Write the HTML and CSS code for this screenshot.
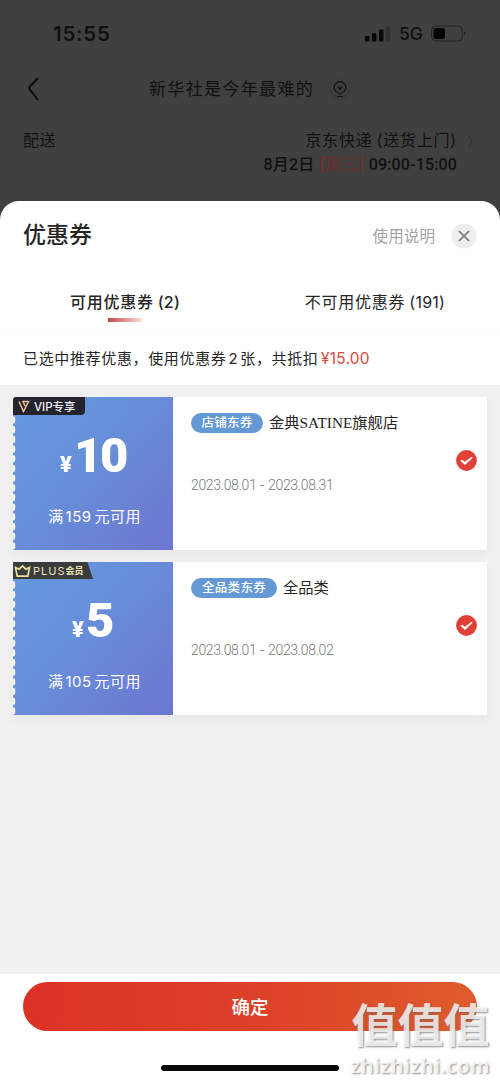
FILE: index.html
```html
<!DOCTYPE html>
<html lang="zh-CN">
<head>
<meta charset="utf-8">
<title>优惠券</title>
<link rel="stylesheet" href="styles.css">
</head>
<body>
<div class="screen">
  <header class="backdrop">
    <div class="status">
      <span class="time">15:55</span>
      <div class="signals">
        <svg class="bars" width="26" height="16" viewBox="0 0 26 16"><rect x="0" y="10" width="4.4" height="5.5" rx="1"/><rect x="7" y="7" width="4.4" height="8.5" rx="1"/><rect x="14" y="3.5" width="4.4" height="12" rx="1"/><rect x="20.8" y="0.5" width="4.4" height="15" rx="1" fill="#303030"/></svg>
        <span class="network">5G</span>
        <svg width="36" height="18" viewBox="0 0 36 18"><rect x=".7" y="1" width="30.5" height="15" rx="4" fill="none" stroke="#222" stroke-width="1"/><rect x="2.5" y="3" width="11.5" height="11" rx="2.5" fill="#050505"/><path d="M33 6.5q3 2 0 4z" fill="#222"/></svg>
      </div>
    </div>
    <nav class="nav">
      <svg class="back" width="16" height="28" viewBox="0 0 16 28"><path d="M12 3 3.4 12Q2.5 13 3.4 14L12 25" fill="none" stroke="#0c0c0c" stroke-width="2"/></svg>
      <span class="nav-title">新华社是今年最难的</span>
      <svg class="pin" width="24" height="26" viewBox="0 0 24 26"><circle cx="12" cy="13" r="11.5" fill="#3d3d3d"/><g fill="none" stroke="#141414" stroke-width="1.2"><path d="M12 18.2C8 16 6.2 14 6.2 11.4a5.8 5.8 0 0 1 11.6 0C17.8 14 16 16 12 18.2zM9 20.5h6"/><path d="m9.6 10.6 2.4 2.7 2.4-2.7M12 10v1.6"/></g></svg>
    </nav>
    <div class="delivery">
      <span class="delivery-label">配送</span>
      <div class="delivery-info">
        <div class="method">京东快递<span class="paren">(</span>送货上门)<svg width="8" height="16" viewBox="0 0 8 16"><path d="m2 2 3 6-3 6" fill="none" stroke="#303030"/></svg></div>
        <div class="slot"><span class="day">8月2日</span><span class="weekday">[周三]</span><span class="hours">09:00-15:00</span></div>
      </div>
    </div>
  </header>

  <main class="sheet">
    <div class="sheet-head">
      <h1>优惠券</h1>
      <span class="help">使用说明</span>
      <svg class="close" width="26" height="26" viewBox="0 0 26 26"><circle cx="13" cy="13" r="12.6" fill="#efefef"/><path d="m8 8 10 10M18 8 8 18" stroke="#777" stroke-width="1.7"/></svg>
    </div>
    <div class="tabs">
      <div class="tab active"><span class="tab-text">可用优惠券<span class="count">(2)</span></span></div>
      <div class="tab"><span class="tab-text">不可用优惠券<span class="count">(191)</span></span></div>
    </div>
    <p class="summary"><span class="chosen">已选中推荐优惠，使用优惠券<span class="number">2</span>张，共抵扣</span><span class="saving">¥15.00</span></p>

    <section class="coupons">
      <article class="coupon">
        <div class="value">
          <div class="badge vip"><svg width="12" height="13" viewBox="0 0 12 13"><path d="M1 1.5 5.5 11.5 10.5 1.5H5L7 6" fill="none" stroke="#e9bd91" stroke-width="1.5"/></svg><span>VIP专享</span></div>
          <div class="amount"><span class="yen">¥</span><span class="ten">10</span></div>
          <div class="rule">满<b>159</b>元可用</div>
          <svg class="edge" width="4" height="153" viewBox="0 0 4 153"><defs><pattern id="teeth" width="4" height="9.7" patternUnits="userSpaceOnUse"><ellipse cx="0" cy="3.4" rx="2.3" ry="3.9" fill="#f4f5f7"/></pattern></defs><rect width="4" height="153" fill="url(#teeth)"/></svg>
        </div>
        <div class="detail">
          <div class="coupon-title"><span class="tag">店铺东券</span><span class="shop">金典<span class="latin">SATINE</span>旗舰店</span></div>
          <div class="dates">2023.08.01 <span class="dash">-</span> 2023.08.31</div>
        </div>
        <svg class="check" width="21" height="21" viewBox="0 0 21 21"><circle cx="10.5" cy="10.5" r="10.4" fill="#df4038"/><path d="m4.2 10.8 2-1.1 2.7 2 6.8-5 1 1.1-7.7 7.2z" fill="#fff"/></svg>
      </article>
      <article class="coupon">
        <div class="value">
          <div class="badge plus"><svg width="17" height="14" viewBox="0 0 17 14"><path d="m1.5 3.5 3.7 1.7L8.5 2l3.3 3.2 3.7-1.7-1.7 8.7H3.2z" fill="none" stroke="#eee29c" stroke-width="1.7"/></svg><span class="plus-word">PLUS</span><span class="member">会员</span></div>
          <div class="amount"><span class="yen">¥</span><span class="five">5</span></div>
          <div class="rule">满<b>105</b>元可用</div>
          <svg class="edge" width="4" height="153" viewBox="0 0 4 153"><rect width="4" height="153" fill="url(#teeth)"/></svg>
        </div>
        <div class="detail">
          <div class="coupon-title"><span class="tag wide">全品类东券</span><span class="shop">全品类</span></div>
          <div class="dates">2023.08.01 <span class="dash">-</span> 2023.08.02</div>
        </div>
        <svg class="check" width="21" height="21" viewBox="0 0 21 21"><circle cx="10.5" cy="10.5" r="10.4" fill="#df4038"/><path d="m4.2 10.8 2-1.1 2.7 2 6.8-5 1 1.1-7.7 7.2z" fill="#fff"/></svg>
      </article>
    </section>

    <footer class="actions">
      <button class="confirm">确定</button>
      <div class="home"></div>
    </footer>
  </main>
  <div class="watermark"><div class="mark-name">值值值</div><div class="mark-site">zhizhizhi.com</div></div>
</div>
</body>
</html>
```
FILE: styles.css
```css
* { box-sizing: border-box; }
body { margin: 0; background: #404040; font-family: Inter, "Noto Sans CJK SC", sans-serif; color: #262626; }
svg { display: block; flex: none; }
.screen { position: relative; width: 500px; height: 1082px; overflow: hidden; display: flex; flex-direction: column; white-space: nowrap; }

.backdrop { height: 201px; flex: none; color: #111; }
.status { display: flex; justify-content: space-between; height: 66px; padding: 19px 33px 0 53px; }
.time { font-size: 20.5px; line-height: 30px; font-weight: 600; letter-spacing: .75px; }
.signals { display: flex; align-items: center; height: 29px; }
.bars { fill: #080808; margin-right: 8px; }
.network { width: 25px; font-size: 17.5px; font-weight: 500; margin-right: 7px; }
.nav { display: flex; align-items: center; height: 46px; padding-left: 26px; }
.nav-title { width: 165px; margin-left: 107px; font-size: 17px; letter-spacing: 1.35px; line-height: 44px; }
.pin { margin-left: 14px; }
.delivery { display: flex; justify-content: space-between; padding: 16px 25px 0 23px; }
.delivery-label { font-size: 16px; line-height: 25px; letter-spacing: .5px; }
.delivery-info { display: flex; flex-direction: column; align-items: flex-end; font-size: 16px; }
.method { display: flex; align-items: center; height: 25px; letter-spacing: .8px; line-height: 25px; }
.method svg { margin-left: 10px; }
.paren { margin-left: 4px; }
.slot { display: flex; height: 24px; line-height: 24px; margin-right: 18px; font-family: Roboto, "Noto Sans CJK SC", sans-serif; font-weight: 500; }
.day { letter-spacing: .2px; }
.weekday { color: #742c29; margin: 0 4px 0 5px; font-weight: 400; letter-spacing: 1.2px; }
.hours { letter-spacing: .15px; }

.sheet { flex: 1; display: flex; flex-direction: column; background: #fff; border-radius: 19px 19px 0 0; overflow: hidden; }
.sheet-head { display: flex; align-items: center; height: 70px; padding: 0 23px; }
h1 { flex: 1; margin: 0 0 7px; font-size: 23px; font-weight: 500; }
.help { color: #a2a2a2; font-size: 15.6px; margin-bottom: 2px; }
.close { margin-left: 16px; }
.tabs { display: grid; grid-template-columns: 1fr 1fr; height: 62px; border-bottom: 1px solid #fafafa; }
.tab { display: flex; flex-direction: column; align-items: center; font-size: 16px; line-height: 24px; letter-spacing: .75px; padding-top: 19px; }
.active { font-weight: 500; }
.active::after { content: ""; width: 34px; height: 4px; margin-top: 4px; background: linear-gradient(90deg, #c84740, #f6dddd); }
.count { margin-left: 4px; letter-spacing: .25px; }
.summary { display: flex; margin: 0; padding: 0 23px; height: 52px; line-height: 52px; font-size: 15px; }
.chosen { width: 298px; letter-spacing: .65px; }
.number { margin: 0 2px; }
.saving { color: #d94a42; font-size: 15.4px; letter-spacing: .25px; }

.coupons { flex: 1; display: flex; flex-direction: column; gap: 12px; padding: 12px 13px; background: #f1f1f1; }
.coupon { display: flex; height: 153px; background: #fff; padding-right: 10px; box-shadow: 0 4px 10px #0000000c; }
.value { position: relative; width: 160px; display: flex; flex-direction: column; color: #fff; background: linear-gradient(132deg, #6499dc 0%, #6790da 40%, #6d76d0 100%); }
.badge { position: relative; z-index: 1; display: flex; align-items: center; height: 18px; }
.vip { width: 72px; padding-left: 5px; gap: 4px; border-radius: 3px 0 4px 0; background: #24242f; color: #ededf2; font-size: 11.4px; font-weight: 500; }
.plus { width: 80px; height: 17px; background: #393b3c; color: #eee5b5; clip-path: polygon(0 0, 93% 0, 100% 100%, 0 100%); padding-left: 1px; font-size: 11px; }
.plus-word { margin-left: 2px; letter-spacing: 1px; }
.member { font-size: 9px; font-weight: 700; }
.amount { display: flex; justify-content: center; align-items: baseline; height: 88px; padding-top: 15px; line-height: 52px; font-weight: 800; }
.plus + .amount { height: 89px; padding-top: 16px; }
.yen { font-size: 21px; }
.ten, .five { font-family: Roboto, sans-serif; font-weight: 900; font-size: 49px; margin-left: 2px; }
.ten { letter-spacing: -2.2px; }
.rule { padding-left: 3px; text-align: center; font-size: 15px; line-height: 28px; letter-spacing: .45px; }
.rule b { font-weight: 400; margin: 0 3px 0 2px; }
.edge { position: absolute; left: 0; top: 0; }
.detail { flex: 1; padding-left: 18px; }
.coupon-title { display: flex; align-items: center; height: 51px; gap: 6px; }
.tag { width: 72px; height: 20px; border-radius: 10px; background: #6499d5; color: #fff; font-size: 12.5px; font-weight: 500; line-height: 20px; text-align: center; letter-spacing: .3px; }
.wide { width: 86px; }
.shop { font-size: 15.3px; padding-bottom: 3px; }
.latin { font-family: "Liberation Serif", serif; font-size: 15.3px; }
.dates { margin-top: 25px; font-family: Roboto, sans-serif; font-size: 14px; line-height: 24px; font-weight: 300; color: #777; letter-spacing: -.35px; }
.dash { display: inline-block; transform: scaleX(1.35); margin: 0 1px; }
.check { margin-top: 53px; }

.actions { height: 108px; padding: 8px 23px 0; background: #fff; }
.confirm { display: block; width: 454px; height: 49px; border: 0; border-radius: 25px; padding: 0; background: linear-gradient(90deg, #dc3226, #dd4028 50%, #df5c2c); color: #fff; font-family: "Noto Sans CJK SC", sans-serif; font-size: 18.5px; font-weight: 500; line-height: 49px; }
.home { width: 178px; height: 6px; border-radius: 3px; background: #090909; margin: 34px auto 0; }
.watermark { position: absolute; left: 349px; top: 995px; width: 143px; color: #ffffffc8; text-shadow: 1px 1px 2px #666b; text-align: center; }
.mark-name { font-family: "Noto Sans CJK SC", sans-serif; font-size: 46px; font-weight: 700; line-height: 55px; }
.mark-site { margin-top: 4px; font-family: "Open Sans", sans-serif; font-size: 20px; font-weight: 600; line-height: 23px; letter-spacing: .7px; }
```
